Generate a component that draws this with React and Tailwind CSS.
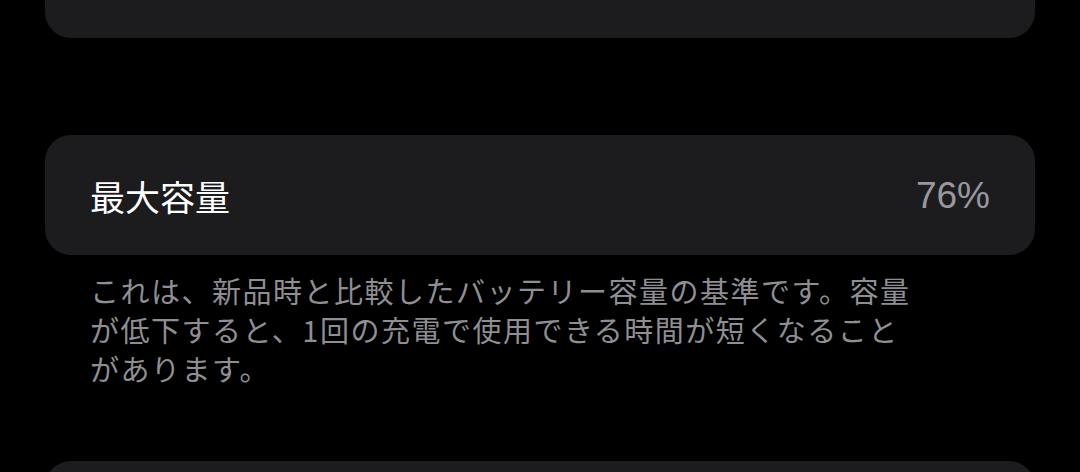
import React from 'react';

const font = { fontFamily: '"Noto Sans CJK JP", "Noto Sans", sans-serif' };

const App = () => {
    return (
        <div className="bg-black w-[1080px] h-[472px] overflow-hidden px-[45px]" style={font}>
            {/* previous group, scrolled mostly out of view */}
            <div className="h-[38px] bg-[#1c1c1e] rounded-b-[26px]" />

            {/* max capacity row */}
            <div className="mt-[97px] h-[120px] bg-[#1c1c1e] rounded-[26px] flex items-center justify-between pl-[45px] pr-[45px]">
                <span className="text-white text-[35px] leading-none">最大容量</span>
                <span className="text-[#98989e] text-[37px] leading-none" style={{ fontFamily: '"Liberation Sans", sans-serif' }}>76%</span>
            </div>

            <p className="mt-[16px] pl-[45px] w-[875px] text-[#8e8e93] text-[29px] leading-[39px] tracking-[1.5px]">
                これは、新品時と比較したバッテリー容量の基準です。容量が低下すると、1回の充電で使用できる時間が短くなることがあります。
            </p>

            {/* next group */}
            <div className="mt-[73px] h-[60px] bg-[#1c1c1e] rounded-t-[26px]" />
        </div>
    );
};

export default App;
